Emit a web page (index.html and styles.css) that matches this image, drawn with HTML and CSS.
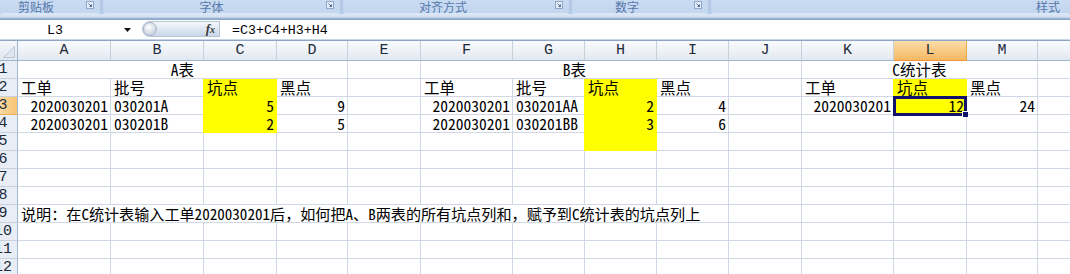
FILE: index.html
```html
<!DOCTYPE html>
<html lang="zh-CN">
<head>
<meta charset="utf-8">
<title>Excel</title>
<link rel="stylesheet" href="styles.css">
</head>
<body>
<div class="app">
  <div class="ribbon">
    <div class="grp g-clip"><span class="glabel">剪贴板</span><span class="launch"><svg width="8" height="8" viewBox="0 0 8 8"><rect x="0.5" y="0.5" width="7" height="7" fill="#e6eef9" stroke="#8fa6c6"/><path d="M2.5 2.5 L5.5 5.5 M5.5 3.5 V5.5 H3.5" stroke="#4d6a93" fill="none"/></svg></span></div>
    <div class="grp g-font"><span class="glabel">字体</span><span class="launch"><svg width="8" height="8" viewBox="0 0 8 8"><rect x="0.5" y="0.5" width="7" height="7" fill="#e6eef9" stroke="#8fa6c6"/><path d="M2.5 2.5 L5.5 5.5 M5.5 3.5 V5.5 H3.5" stroke="#4d6a93" fill="none"/></svg></span></div>
    <div class="grp g-align"><span class="glabel">对齐方式</span><span class="launch"><svg width="8" height="8" viewBox="0 0 8 8"><rect x="0.5" y="0.5" width="7" height="7" fill="#e6eef9" stroke="#8fa6c6"/><path d="M2.5 2.5 L5.5 5.5 M5.5 3.5 V5.5 H3.5" stroke="#4d6a93" fill="none"/></svg></span></div>
    <div class="grp g-num"><span class="glabel">数字</span><span class="launch"><svg width="8" height="8" viewBox="0 0 8 8"><rect x="0.5" y="0.5" width="7" height="7" fill="#e6eef9" stroke="#8fa6c6"/><path d="M2.5 2.5 L5.5 5.5 M5.5 3.5 V5.5 H3.5" stroke="#4d6a93" fill="none"/></svg></span></div>
    <div class="grp g-style"><span class="glabel glabel-right">样式</span></div>
  </div>
  <div class="band"></div>
  <div class="fbar">
    <div class="namebox">L3</div>
    <div class="nb-drop"><svg width="7" height="4" viewBox="0 0 7 4"><path d="M0 0H7L3.5 4Z" fill="#111"/></svg></div>
    <div class="fxpill"><span class="knob"></span><span class="fx">f<span class="fx-x">x</span></span></div>
    <div class="formula">=C3+C4+H3+H4</div>
  </div>
  <div class="sheet">
    <div class="corner"><svg width="17" height="19" viewBox="0 0 17 19"><polygon points="14.5,5.5 14.5,16.5 3.5,16.5" fill="#dfe6ef" stroke="#b9c7d8"/></svg></div>
    <div class="ch">A</div><div class="ch">B</div><div class="ch">C</div><div class="ch">D</div><div class="ch">E</div><div class="ch">F</div><div class="ch">G</div><div class="ch">H</div><div class="ch">I</div><div class="ch">J</div><div class="ch">K</div><div class="ch ch-on">L</div><div class="ch">M</div><div class="ch"></div>

    <div class="rh"><span>1</span></div>
    <div class="c ctr span4">A表</div><div class="c"></div>
    <div class="c ctr span4">B表</div><div class="c"></div>
    <div class="c ctr span3">C统计表</div><div class="c"></div>

    <div class="rh"><span>2</span></div>
    <div class="c">工单</div><div class="c">批号</div><div class="c y">坑点</div><div class="c">黑点</div><div class="c"></div>
    <div class="c">工单</div><div class="c">批号</div><div class="c y">坑点</div><div class="c">黑点</div><div class="c"></div>
    <div class="c">工单</div><div class="c y">坑点</div><div class="c">黑点</div><div class="c"></div>

    <div class="rh rh-on"><span>3</span></div>
    <div class="c r">2020030201</div><div class="c">030201A</div><div class="c y r">5</div><div class="c r">9</div><div class="c"></div>
    <div class="c r">2020030201</div><div class="c">030201AA</div><div class="c y r">2</div><div class="c r">4</div><div class="c"></div>
    <div class="c r">2020030201</div><div class="c y r active">12<span class="sel"><span class="handle"></span></span></div><div class="c r">24</div><div class="c"></div>

    <div class="rh"><span>4</span></div>
    <div class="c r">2020030201</div><div class="c">030201B</div><div class="c y r">2</div><div class="c r">5</div><div class="c"></div>
    <div class="c r">2020030201</div><div class="c">030201BB</div><div class="c y r">3</div><div class="c r">6</div><div class="c"></div>
    <div class="c"></div><div class="c"></div><div class="c"></div><div class="c"></div>

    <div class="rh"><span>5</span></div>
    <div class="c"></div><div class="c"></div><div class="c"></div><div class="c"></div><div class="c"></div>
    <div class="c"></div><div class="c"></div><div class="c y"></div><div class="c"></div><div class="c"></div>
    <div class="c"></div><div class="c"></div><div class="c"></div><div class="c"></div>

    <div class="rh"><span>6</span></div>
    <div class="c"></div><div class="c"></div><div class="c"></div><div class="c"></div><div class="c"></div>
    <div class="c"></div><div class="c"></div><div class="c"></div><div class="c"></div><div class="c"></div>
    <div class="c"></div><div class="c"></div><div class="c"></div><div class="c"></div>

    <div class="rh"><span>7</span></div>
    <div class="c"></div><div class="c"></div><div class="c"></div><div class="c"></div><div class="c"></div>
    <div class="c"></div><div class="c"></div><div class="c"></div><div class="c"></div><div class="c"></div>
    <div class="c"></div><div class="c"></div><div class="c"></div><div class="c"></div>

    <div class="rh"><span>8</span></div>
    <div class="c"></div><div class="c"></div><div class="c"></div><div class="c"></div><div class="c"></div>
    <div class="c"></div><div class="c"></div><div class="c"></div><div class="c"></div><div class="c"></div>
    <div class="c"></div><div class="c"></div><div class="c"></div><div class="c"></div>

    <div class="rh"><span>9</span></div>
    <div class="c note span9">说明：在C统计表输入工单2020030201后，如何把A、B两表的所有坑点列和，赋予到C统计表的坑点列上</div>
    <div class="c"></div><div class="c"></div><div class="c"></div><div class="c"></div><div class="c"></div>

    <div class="rh"><span>10</span></div>
    <div class="c"></div><div class="c"></div><div class="c"></div><div class="c"></div><div class="c"></div>
    <div class="c"></div><div class="c"></div><div class="c"></div><div class="c"></div><div class="c"></div>
    <div class="c"></div><div class="c"></div><div class="c"></div><div class="c"></div>

    <div class="rh"><span>11</span></div>
    <div class="c"></div><div class="c"></div><div class="c"></div><div class="c"></div><div class="c"></div>
    <div class="c"></div><div class="c"></div><div class="c"></div><div class="c"></div><div class="c"></div>
    <div class="c"></div><div class="c"></div><div class="c"></div><div class="c"></div>

    <div class="rh"><span>12</span></div>
    <div class="c"></div><div class="c"></div><div class="c"></div><div class="c"></div><div class="c"></div>
    <div class="c"></div><div class="c"></div><div class="c"></div><div class="c"></div><div class="c"></div>
    <div class="c"></div><div class="c"></div><div class="c"></div><div class="c"></div>
  </div>
</div>
</body>
</html>
```

FILE: styles.css
```css
html, body {
  margin: 0;
  padding: 0;
  background: #ffffff;
}
.app {
  width: 1070px;
  height: 274px;
  overflow: hidden;
  background: #ffffff;
}

/* ribbon group labels */
.ribbon {
  display: flex;
  gap: 3px;
  height: 14px;
  background: #b3c9e6;
}
.grp {
  display: flex;
  align-items: flex-end;
  background: linear-gradient(#c9dbf1, #c2d6ef);
  border-bottom: 1px solid #dbe7f6;
  border-radius: 0 0 3px 3px;
  box-sizing: border-box;
  padding-right: 6px;
}
.g-clip { width: 100px; }
.g-font { width: 237px; }
.g-align { width: 226px; }
.g-num { width: 136px; }
.g-style { flex: 1; }
.glabel {
  flex: 1;
  text-align: center;
  font-family: "Noto Sans CJK SC", sans-serif;
  font-size: 12px;
  line-height: 13px;
  color: #5577aa;
  padding-right: 12px;
}
.g-clip .glabel { padding-right: 14px; }
.g-font .glabel { padding-right: 6px; }
.glabel-right { text-align: right; padding-right: 4px; }
.launch {
  align-self: flex-start;
  margin-top: 1px;
  display: flex;
}

.band {
  height: 6px;
  background: linear-gradient(#dbe6f4 0, #d3e0f1 3px, #a9bfdc 4px, #8ea7c8 5px, #8ea7c8 6px);
}

/* formula bar */
.fbar {
  display: flex;
  height: 21px;
  box-sizing: border-box;
  border-bottom: 1px solid #8ea5c4;
  box-shadow: inset 0 -1px 0 #c9d6e8;
  background: #ffffff;
}
.namebox {
  width: 110px;
  text-align: center;
  font-family: "Liberation Mono", monospace;
  font-size: 13.3px;
  line-height: 19px;
  padding-top: 1px;
  color: #000;
}
.nb-drop {
  width: 32px;
  display: flex;
  align-items: center;
  justify-content: flex-end;
  padding-right: 11px;
  box-sizing: border-box;
}
.fxpill {
  width: 78px;
  height: 16px;
  margin-top: 1px;
  display: flex;
  align-items: center;
  justify-content: space-between;
  box-sizing: border-box;
  border: 1px solid #b6c4d8;
  border-radius: 8px 0 0 8px;
  background: linear-gradient(#f4f7fb, #dde6f2 55%, #c9d7ea);
}
.knob {
  width: 14px;
  height: 14px;
  border-radius: 50%;
  box-sizing: border-box;
  border: 1px solid #aab6c6;
  background: radial-gradient(circle at 40% 35%, #ffffff, #d4dbe5 60%, #b8c2cf);
}
.fx {
  font-family: "Liberation Serif", serif;
  font-style: italic;
  font-weight: bold;
  font-size: 13px;
  color: #3a3a3a;
  padding-right: 4px;
  line-height: 14px;
}
.fx-x { font-size: 10px; }
.formula {
  flex: 1;
  padding-left: 12px;
  font-family: "Liberation Mono", monospace;
  font-size: 13.3px;
  line-height: 19px;
  padding-top: 1px;
  color: #000;
}

/* sheet */
.sheet {
  display: grid;
  grid-template-columns: 18px 93px 93px 73px 71px 73px 92px 72px 72px 72px 73px 92px 73px 71px 40px;
  grid-template-rows: 20px;
  grid-auto-rows: 18px;
}
.corner {
  background: linear-gradient(#f3f6fa, #e2e8f1);
  border-right: 1px solid #9eb6ce;
  border-bottom: 1px solid #9eb6ce;
  box-sizing: border-box;
  display: flex;
}
.ch {
  box-sizing: border-box;
  background: linear-gradient(#f9fafc, #eef2f7 50%, #e2e8f1);
  border-right: 1px solid #c6d1de;
  border-bottom: 1px solid #9eb6ce;
  font-family: "Liberation Mono", monospace;
  font-size: 15px;
  line-height: 16px;
  color: #1c2a3a;
  display: flex;
  align-items: flex-end;
  justify-content: center;
  padding-bottom: 1px;
}
.ch-on {
  background: linear-gradient(#fbdcaa, #f8cb84 50%, #f4b863);
  border-right-color: #e9a94d;
  border-bottom-color: #f29536;
}
.rh {
  box-sizing: border-box;
  background: #e8edf6;
  border-right: 1px solid #9eb6ce;
  border-bottom: 1px solid #c6d1de;
  overflow: hidden;
  display: flex;
  align-items: flex-end;
  justify-content: flex-start;
  font-family: "Liberation Mono", monospace;
  font-size: 15px;
  line-height: 16px;
  color: #1c2a3a;
}
.rh span {
  flex: none;
  width: 30px;
  margin-left: -12px;
  text-align: center;
}
.rh-on {
  background: linear-gradient(90deg, #fbd9a3, #f7c474);
  border-bottom-color: #efb05a;
}
.c {
  box-sizing: border-box;
  border-right: 1px solid #d0d7e5;
  border-bottom: 1px solid #d0d7e5;
  display: flex;
  align-items: flex-end;
  padding: 0 3px;
  font-family: "Noto Sans Mono CJK SC", "Noto Sans CJK SC", sans-serif;
  font-size: 15.5px;
  line-height: 17px;
  color: #000;
  white-space: nowrap;
  min-width: 0;
}
.note { font-size: 15.1px; }
.r { justify-content: flex-end; padding-right: 2px; }
.ctr { justify-content: center; }
.span3 { grid-column: span 3; }
.span4 { grid-column: span 4; }
.span9 { grid-column: span 9; }
.y {
  background: #ffff00;
  border-right-color: #ffff00;
  border-bottom-color: #ffff00;
  box-shadow: -1px 0 0 #ffff00;
}
.active { position: relative; }
.sel {
  position: absolute;
  left: -1px;
  top: -1px;
  right: -1px;
  bottom: -2px;
  border: 3px solid #13136e;
}
.handle {
  position: absolute;
  right: -4px;
  bottom: -4px;
  width: 5px;
  height: 5px;
  background: #13136e;
  box-shadow: -1px -1px 0 #ffffff;
}
```
